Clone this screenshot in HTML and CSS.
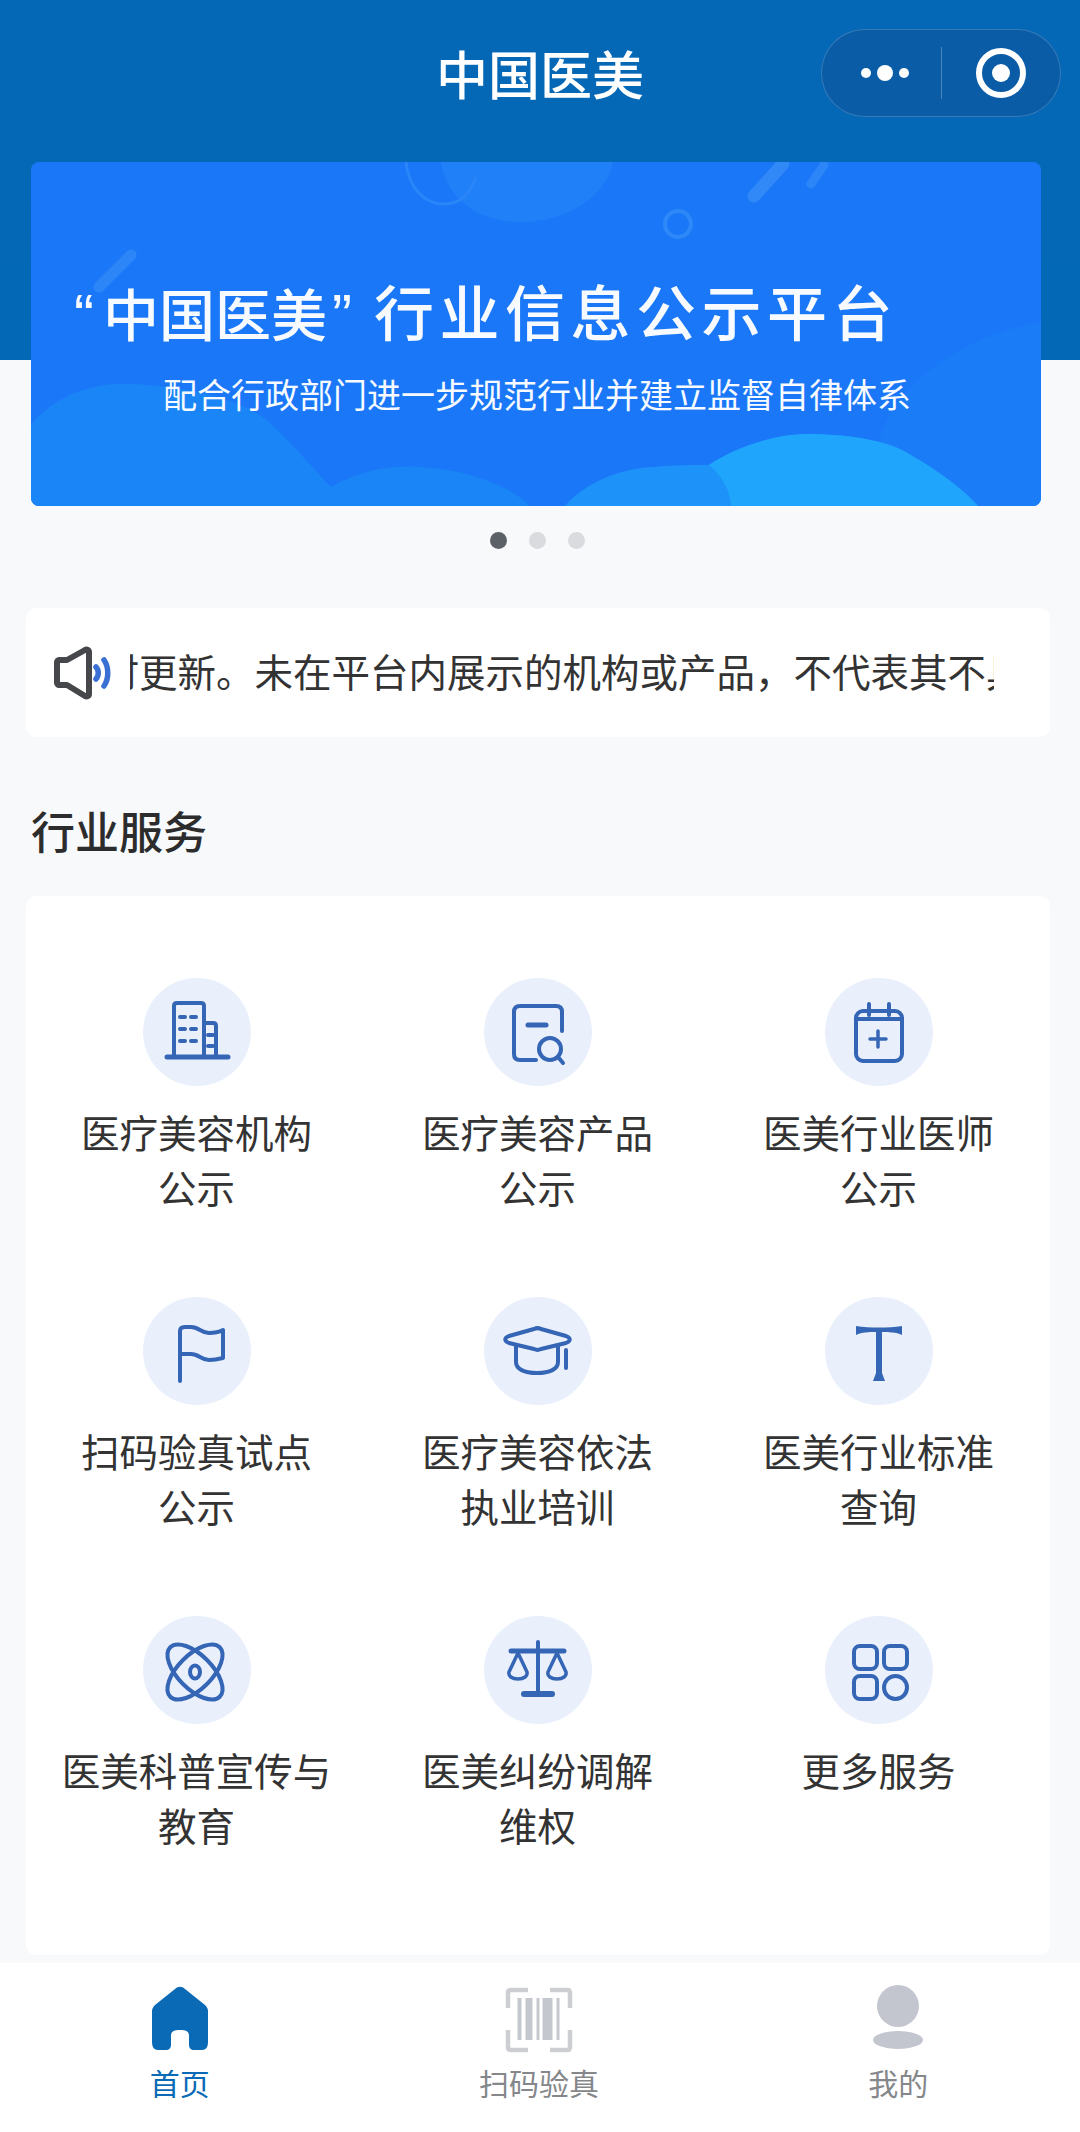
FILE: index.html
```html
<!DOCTYPE html>
<html>
	<head>
		<meta charset="utf-8">
		<title>中国医美</title>
		<meta name="viewport" content="width=device-width, initial-scale=1">
		<link rel="stylesheet" href="styles.css">
	</head>
	<body>
		<header class="topbar">
			<span></span>
			<h1 class="topbar-title">中国医美</h1>
			<div class="capsule">
				<svg class="capsule-more" viewBox="0 0 70 24"><circle cx="16" cy="12" r="5"/><circle cx="35" cy="12" r="8"/><circle cx="54" cy="12" r="5"/></svg>
				<i class="capsule-line"></i>
				<svg class="capsule-close" viewBox="0 0 56 56"><circle class="ring" cx="28" cy="28" r="22"/><circle cx="28" cy="28" r="9"/></svg>
			</div>
		</header>

		<section class="banner">
			<svg class="banner-bg" viewBox="0 0 1010 344" preserveAspectRatio="none">
				<path fill="#1a7df7" d="M1010 160C930 175 880 215 857 256C840 290 840 320 850 344H1010Z"/>
				<path fill="#1a85f6" d="M0 263C25 232 65 220 100 222C165 225 215 240 238 260C265 285 285 310 300 325C330 308 360 303 389 305C440 308 480 325 499 344H0Z"/>
				<path fill="#1d93fa" d="M534 344C555 320 590 306 623 305C645 303 665 303 678 303C705 285 745 271 782 272C825 273 860 280 878 292C910 310 935 330 947 344Z"/>
				<path fill="#1fa6fc" d="M678 303C705 285 745 271 782 272C825 273 860 280 878 292C910 310 935 330 947 344H700C700 330 690 312 678 303Z"/>
				<path fill="#2080f8" d="M410 0C415 35 445 60 490 60C535 60 575 35 582 0Z"/>
				<path fill="none" stroke="#2a85f8" stroke-width="3" d="M375 0C378 25 392 42 413 42C430 42 440 30 445 15"/>
				<circle fill="none" stroke="#2e88f8" stroke-width="4" cx="647" cy="62" r="13"/>
				<path fill="none" stroke="#3189f8" stroke-width="13" stroke-linecap="round" d="M723 34L752 2"/>
				<path fill="none" stroke="#2c86f8" stroke-width="9" stroke-linecap="round" d="M780 22L793 3"/>
				<path fill="none" stroke="#2c86f8" stroke-width="11" stroke-linecap="round" d="M68 125L100 93"/>
			</svg>
			<div class="banner-title"><span class="quote quote-open">“</span><span class="brand">中国医美</span><span class="quote quote-close">”</span><span class="slogan">行业信息公示平台</span></div>
			<div class="banner-sub">配合行政部门进一步规范行业并建立监督自律体系</div>
		</section>

		<div class="dots">
			<i class="dot dot-on"></i>
			<i class="dot"></i>
			<i class="dot"></i>
		</div>

		<section class="card notice">
			<svg class="notice-icon" viewBox="0 0 60 56">
				<path class="speaker" d="M7 15H15L33 5C35 4 37 5 37 7V49C37 51 35 52 33 51L15 40H7C6 40 5 39 5 38V17C5 16 6 15 7 15Z"/>
				<path class="waves" d="M44 22C47 25 47 31 44 34"/>
				<path class="waves" d="M52 15C57 22 57 34 52 41"/>
			</svg>
			<div class="notice-clip">
				<span class="notice-text">及时更新。未在平台内展示的机构或产品，不代表其不具备资质</span>
			</div>
		</section>

		<h2 class="section-title">行业服务</h2>

		<section class="card services">
			<a class="service">
				<span class="service-icon">
					<svg class="ico" viewBox="0 0 108 108"><path d="M31 78V28C31 26 32 25 34 25H58C60 25 61 26 61 28V78"/><path d="M61 45H70C72 45 73 46 73 48V78"/><path d="M24 79H85" stroke-width="5"/><path d="M37 39H42M48 39H53M37 51H42M48 51H53M37 63H42M48 63H53M65 57H70M65 68H70"/></svg>
				</span>
				<span class="service-name">医疗美容机构<br>公示</span>
			</a>
			<a class="service">
				<span class="service-icon">
					<svg class="ico" viewBox="0 0 108 108"><path d="M52 82H36C32 82 30 80 30 76V34C30 30 32 28 36 28H72C76 28 78 30 78 34V53"/><path d="M44 47H62" stroke-width="5"/><circle cx="66" cy="71" r="11"/><path d="M74 79L79 85"/></svg>
				</span>
				<span class="service-name">医疗美容产品<br>公示</span>
			</a>
			<a class="service">
				<span class="service-icon">
					<svg class="ico" viewBox="0 0 108 108"><rect x="31" y="33" width="46" height="50" rx="7"/><path d="M31 41H77M44 26V37M64 26V37"/><path d="M53 53V69M45 61H61" stroke-width="3.5"/></svg>
				</span>
				<span class="service-name">医美行业医师<br>公示</span>
			</a>
			<a class="service">
				<span class="service-icon">
					<svg class="ico" viewBox="0 0 108 108"><path d="M37 84V34C37 31 39 30 42 30H48C56 30 58 36 66 36C71 36 76 35 80 33V61C76 62 71 63 66 63C58 63 56 57 48 57H37"/></svg>
				</span>
				<span class="service-name">扫码验真试点<br>公示</span>
			</a>
			<a class="service">
				<span class="service-icon">
					<svg class="ico" viewBox="0 0 108 108"><path d="M50 32C52 31 55 31 57 32L82 39C87 41 87 44 82 46L57 52C55 53 52 53 50 52L25 46C20 44 20 41 25 39Z"/><path d="M32 49V65C32 72 40 76 53 76C66 76 74 72 74 65V49"/><path d="M82 53V71"/></svg>
				</span>
				<span class="service-name">医疗美容依法<br>执业培训</span>
			</a>
			<a class="service">
				<span class="service-icon">
					<svg class="ico" viewBox="0 0 108 108"><path class="ico-solid" d="M31 29C45 31 63 31 77 29V38C71 35 64 35 57 35V76L60 84H48L51 76V35C44 35 37 35 31 38Z"/></svg>
				</span>
				<span class="service-name">医美行业标准<br>查询</span>
			</a>
			<a class="service">
				<span class="service-icon">
					<svg class="ico" viewBox="0 0 108 108"><ellipse cx="52" cy="56" rx="35" ry="17" transform="rotate(45 52 56)"/><ellipse cx="52" cy="56" rx="35" ry="17" transform="rotate(-45 52 56)"/><ellipse cx="52" cy="56" rx="5" ry="6.5"/></svg>
				</span>
				<span class="service-name">医美科普宣传与<br>教育</span>
			</a>
			<a class="service">
				<span class="service-icon">
					<svg class="ico" viewBox="0 0 108 108"><path d="M54 26V78"/><path d="M27 35H80" stroke-width="5"/><path d="M40 78H68" stroke-width="6"/><path d="M34 37L25 56C24 60 28 63 34 63C40 63 44 60 43 56Z" stroke-width="3.5"/><path d="M73 37L64 56C63 60 67 63 73 63C79 63 83 60 82 56Z" stroke-width="3.5"/></svg>
				</span>
				<span class="service-name">医美纠纷调解<br>维权</span>
			</a>
			<a class="service">
				<span class="service-icon">
					<svg class="ico" viewBox="0 0 108 108"><rect x="29" y="30" width="23" height="23" rx="6"/><rect x="59" y="30" width="23" height="23" rx="6"/><rect x="29" y="60" width="23" height="23" rx="6"/><circle cx="70.5" cy="71.5" r="11.5"/></svg>
				</span>
				<span class="service-name">更多服务</span>
			</a>
		</section>

		<nav class="tabbar">
			<a class="tab tab-on">
				<svg class="tab-icon" viewBox="0 0 66 66"><path fill="#0a6ab5" d="M28 5C31 2 35 2 38 5L58 21C60 23 61 25 61 27V58C61 63 59 66 55 66H47C44 66 42 64 42 61V52C42 48 40 46 33 46C26 46 24 48 24 52V61C24 64 22 66 19 66H11C7 66 5 63 5 58V27C5 25 6 23 8 21Z"/></svg>
				<span>首页</span>
			</a>
			<a class="tab">
				<svg class="tab-icon" viewBox="0 0 66 66">
					<path fill="none" stroke="#ccced2" stroke-width="4.5" d="M22 6H5C3 6 2 7 2 9V24M44 6H61C63 6 64 7 64 9V24M2 46V63C2 65 3 66 5 66H22M64 46V63C64 65 63 66 61 66H44"/>
					<path fill="#c4c7ce" d="M11.5 14H15.5V56H11.5ZM19.5 14H26.5V56H19.5ZM30.5 14H33.5V56H30.5ZM36.5 14H46.5V56H36.5ZM50.5 14H53.5V56H50.5Z"/>
				</svg>
				<span>扫码验真</span>
			</a>
			<a class="tab">
				<svg class="tab-icon" viewBox="0 0 66 66"><circle fill="#c3c6cf" cx="33" cy="22" r="21"/><ellipse fill="#c3c6cf" cx="33" cy="56" rx="25" ry="9"/></svg>
				<span>我的</span>
			</a>
		</nav>
	</body>
</html>
```

FILE: styles.css
```css
*{
	box-sizing: border-box;
}
html,body{
	height: 100%;
}
body{
	margin: 0;
	height: 2132px;
	overflow: hidden;
	display: flex;
	flex-direction: column;
	font-family: "Noto Sans CJK SC", "Noto Sans", sans-serif;
	color: #333;
	background: linear-gradient(#0568b6 0, #0368b5 360px, #f7f9fb 360px);
}
h1,h2{
	margin: 0;
	font-weight: 500;
}
i{
	display: block;
}

/* top bar */
.topbar{
	height: 162px;
	padding: 29px 19px 0;
	display: grid;
	grid-template-columns: 1fr auto 1fr;
	align-items: start;
}
.topbar-title{
	color: #fff;
	font-size: 52px;
	line-height: 88px;
}
.capsule{
	justify-self: end;
	width: 240px;
	height: 88px;
	padding-left: 28px;
	display: flex;
	align-items: center;
	background: #0a5ca6;
	border: 1px solid rgba(255,255,255,.18);
	border-radius: 44px;
}
.capsule svg{
	fill: #fff;
}
.capsule-more{
	width: 70px;
	height: 24px;
}
.capsule-line{
	width: 1px;
	height: 52px;
	margin: 0 31px 0 21px;
	background: rgba(255,255,255,.25);
}
.capsule-close{
	width: 56px;
	height: 56px;
}
.capsule-close .ring{
	fill: none;
	stroke: #fff;
	stroke-width: 6;
}

/* banner */
.banner{
	position: relative;
	width: 1010px;
	height: 344px;
	margin-left: 31px;
	overflow: hidden;
	border-radius: 8px;
	background: #1a78f8;
	color: #f7fbff;
	text-align: left;
}
.banner-bg{
	position: absolute;
	left: 0;
	top: 0;
	width: 100%;
	height: 100%;
}
.banner-title{
	position: relative;
	margin: 115px 0 0 43px;
	font-size: 56px;
	font-weight: 500;
	line-height: 66px;
	white-space: nowrap;
}
.quote{
	font-family: "Liberation Sans", sans-serif;
	font-size: 60px;
}
.quote-open{
	margin-right: 9px;
}
.quote-close{
	margin: 0 22px 0 5px;
}
.slogan{
	font-size: 60px;
	letter-spacing: 5.5px;
}
.banner-sub{
	position: relative;
	margin: 21px 0 0 132px;
	font-size: 34px;
	line-height: 48px;
	white-space: nowrap;
}

.dots{
	height: 102px;
	padding: 26px 0 0 490px;
	display: flex;
	gap: 22px;
}
.dot{
	width: 17px;
	height: 17px;
	border-radius: 50%;
	background: #d9dbdf;
}
.dot-on{
	background: #5c6067;
}

.card{
	width: 1024px;
	margin-left: 26px;
	background: #fff;
	border-radius: 10px;
}

/* notice */
.notice{
	height: 129px;
	padding-left: 26px;
	display: flex;
	align-items: center;
}
.notice-icon{
	width: 60px;
	height: 56px;
	flex: none;
}
.notice-icon .speaker{
	fill: none;
	stroke: #45474b;
	stroke-width: 6;
	stroke-linejoin: round;
}
.notice-icon .waves{
	fill: none;
	stroke: #3a6fd4;
	stroke-width: 5.5;
	stroke-linecap: round;
}
.notice-clip{
	width: 864px;
	margin-left: 18px;
	overflow: hidden;
	white-space: nowrap;
}
.notice-text{
	display: block;
	margin: -5px 0 0 -68px;
	font-size: 38.5px;
	line-height: 56px;
	color: #333;
}

.section-title{
	height: 159px;
	padding: 61px 0 0 31px;
	font-size: 44px;
	line-height: 64px;
	color: #2c2c2c;
}

/* service grid */
.services{
	height: 1059px;
	padding-top: 82px;
	display: grid;
	grid-template-columns: repeat(3, 341px);
	grid-auto-rows: 319px;
}
.service{
	display: flex;
	flex-direction: column;
	align-items: center;
	text-align: center;
}
.service-icon{
	width: 108px;
	height: 108px;
	border-radius: 50%;
	background: #e9f0fc;
}
.service-name{
	margin-top: 18px;
	font-size: 38.5px;
	line-height: 55px;
	color: #333;
}
.ico{
	display: block;
	width: 108px;
	height: 108px;
	fill: none;
	stroke: #3565b5;
	stroke-width: 4;
	stroke-linecap: round;
	stroke-linejoin: round;
}
.ico .ico-solid{
	fill: #3565b5;
	stroke: none;
}

/* bottom tabs */
.tabbar{
	margin-top: 8px;
	height: 169px;
	padding: 21px 2px 0 0;
	display: grid;
	grid-template-columns: repeat(3, 1fr);
	background: #fff;
}
.tab{
	display: flex;
	flex-direction: column;
	align-items: center;
	font-size: 30px;
	line-height: 44px;
	color: #85878b;
}
.tab-on{
	color: #0a6ab5;
}
.tab-icon{
	width: 66px;
	height: 66px;
	margin-bottom: 10px;
	overflow: visible;
}
```
